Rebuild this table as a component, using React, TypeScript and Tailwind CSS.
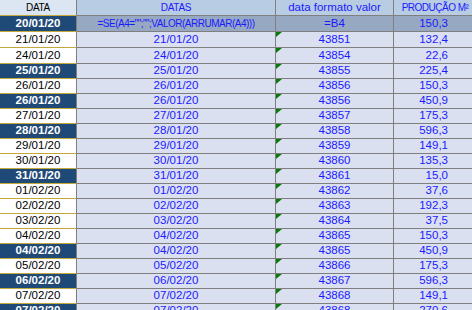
import React from "react";

type Row = { a: string; b: string; c: string; d: string; dark?: boolean };

const rows: Row[] = [
  { a: "21/01/20", b: "21/01/20", c: "43851", d: "132,4" },
  { a: "24/01/20", b: "24/01/20", c: "43854", d: "22,6" },
  { a: "25/01/20", b: "25/01/20", c: "43855", d: "225,4", dark: true },
  { a: "26/01/20", b: "26/01/20", c: "43856", d: "150,3" },
  { a: "26/01/20", b: "26/01/20", c: "43856", d: "450,9", dark: true },
  { a: "27/01/20", b: "27/01/20", c: "43857", d: "175,3" },
  { a: "28/01/20", b: "28/01/20", c: "43858", d: "596,3", dark: true },
  { a: "29/01/20", b: "29/01/20", c: "43859", d: "149,1" },
  { a: "30/01/20", b: "30/01/20", c: "43860", d: "135,3" },
  { a: "31/01/20", b: "31/01/20", c: "43861", d: "15,0", dark: true },
  { a: "01/02/20", b: "01/02/20", c: "43862", d: "37,6" },
  { a: "02/02/20", b: "02/02/20", c: "43863", d: "192,3" },
  { a: "03/02/20", b: "03/02/20", c: "43864", d: "37,5" },
  { a: "04/02/20", b: "04/02/20", c: "43865", d: "150,3" },
  { a: "04/02/20", b: "04/02/20", c: "43865", d: "450,9", dark: true },
  { a: "05/02/20", b: "05/02/20", c: "43866", d: "175,3" },
  { a: "06/02/20", b: "06/02/20", c: "43867", d: "596,3", dark: true },
  { a: "07/02/20", b: "07/02/20", c: "43868", d: "149,1" },
  { a: "07/02/20", b: "07/02/20", c: "43868", d: "270,6", dark: true },
];

function Flag() {
  return (
    <svg width="6" height="6" viewBox="0 0 6 6" className="absolute left-0 top-0">
      <polygon points="0,0 6,0 0,5" fill="#0a7a0a" />
    </svg>
  );
}

export default function App() {
  return (
    <div
      className="w-[472px] h-[310px] overflow-hidden bg-white"
      style={{ fontFamily: '"Liberation Sans", Arial, sans-serif' }}
    >
      <div className="w-[476px] flex flex-col">
        {/* header */}
        <div className="flex h-[16px]">
          <div className="w-[77px] shrink-0 bg-[#dce6f2] border-b border-b-[#c4a83a] border-r border-r-[#7f7f7f] flex items-center justify-center text-[10px] tracking-[-0.3px] text-black">
            DATA
          </div>
          <div className="w-[199px] shrink-0 bg-[#b8cce4] border-b border-r border-[#7f7f7f] flex items-center justify-center text-[10px] tracking-[-0.3px] text-[#1a1aff]">
            DATAS
          </div>
          <div className="w-[118px] shrink-0 bg-[#b8cce4] border-b border-r border-[#7f7f7f] flex items-center justify-center text-[11.5px] text-[#1a1aff]">
            data formato valor
          </div>
          <div className="w-[82px] shrink-0 bg-[#b8cce4] border-b border-[#7f7f7f] flex items-center justify-center text-[10px] tracking-[-0.5px] text-[#1a1aff]">
            PRODUÇÃO M²
          </div>
        </div>
        {/* first data row */}
        <div className="flex h-[16px]">
          <div className="w-[77px] shrink-0 bg-[#1f4a78] border-b border-b-[#c4a83a] border-r border-r-[#7f7f7f] flex items-center justify-center text-[11.5px] font-bold text-white">
            20/01/20
          </div>
          <div className="w-[199px] shrink-0 bg-[#97a9c2] border-b border-r border-[#7f7f7f] flex items-center justify-center text-[10px] tracking-[-0.5px] text-[#1a1aff] whitespace-nowrap">
            =SE(A4="";"";VALOR(ARRUMAR(A4)))
          </div>
          <div className="w-[118px] shrink-0 bg-[#97a9c2] border-b border-r border-[#7f7f7f] flex items-center justify-center text-[11.5px] text-[#1a1aff]">
            =B4
          </div>
          <div className="w-[82px] shrink-0 bg-[#97a9c2] border-b border-[#7f7f7f] flex items-center justify-end pr-[28px] text-[11.5px] text-[#1a1aff]">
            150,3
          </div>
        </div>
        {rows.map((r, i) => (
          <div key={i} className={i < 2 ? "flex h-[16px]" : "flex h-[15px]"}>
            <div
              className={
                r.dark
                  ? "w-[77px] shrink-0 bg-[#1f4a78] border-b border-b-[#c4a83a] border-r border-r-[#7f7f7f] flex items-center justify-center text-[11.5px] font-bold text-white"
                  : "w-[77px] shrink-0 bg-white border-b border-b-[#c4a83a] border-r border-r-[#7f7f7f] flex items-center justify-center text-[11.5px] text-black"
              }
            >
              {r.a}
            </div>
            <div className="w-[199px] shrink-0 bg-[#dbe0f1] border-b border-r border-[#7f7f7f] flex items-center justify-center text-[11.5px] text-[#1a1aff]">
              {r.b}
            </div>
            <div className="relative w-[118px] shrink-0 bg-[#dbe0f1] border-b border-r border-[#7f7f7f] flex items-center justify-center text-[11.5px] text-[#1a1aff]">
              <Flag />
              {r.c}
            </div>
            <div className="w-[82px] shrink-0 bg-[#dbe0f1] border-b border-[#7f7f7f] flex items-center justify-end pr-[28px] text-[11.5px] text-[#1a1aff]">
              {r.d}
            </div>
          </div>
        ))}
      </div>
    </div>
  );
}
